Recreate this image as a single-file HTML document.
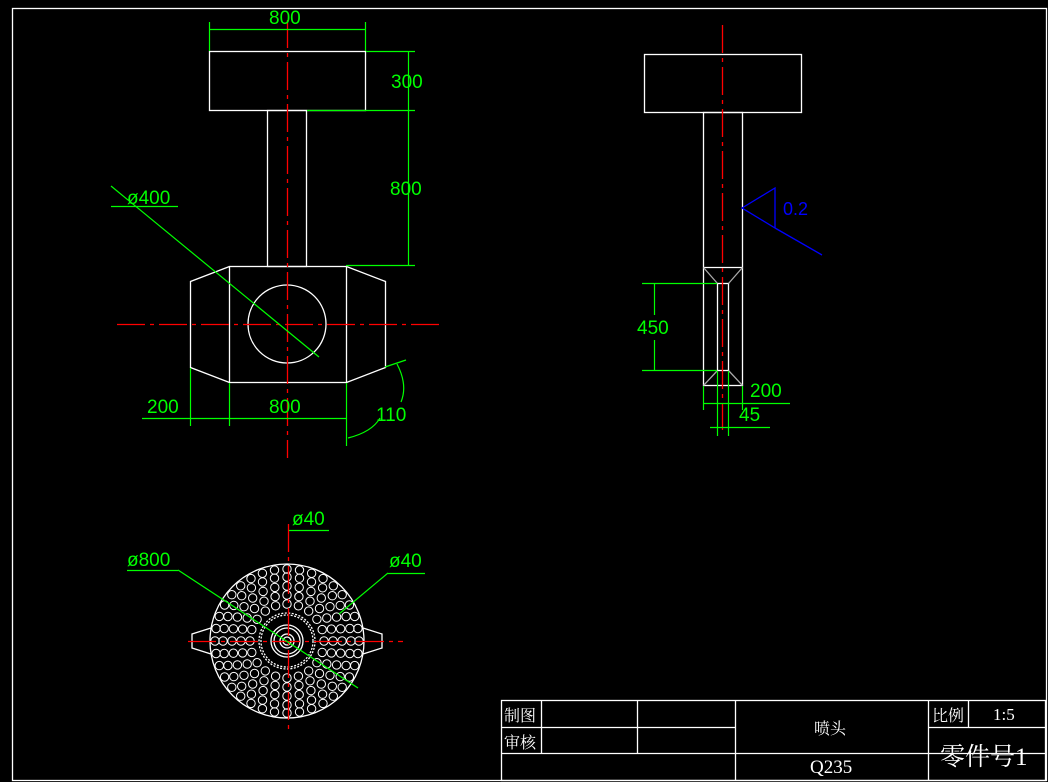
<!DOCTYPE html>
<html><head><meta charset="utf-8"><style>
html,body{margin:0;padding:0;background:#000;width:1048px;height:782px;overflow:hidden}
svg{display:block}
text{font-family:"Liberation Sans",sans-serif;fill:#00ff00;font-size:19px}
.cj{font-family:"Liberation Serif","Noto Serif CJK SC",serif;fill:#fff}
</style></head><body>
<svg width="1048" height="782" viewBox="0 0 1048 782" xmlns="http://www.w3.org/2000/svg">
<g fill="none" stroke="#fff" stroke-width="1.3">
<rect x="12.5" y="8.5" width="1034" height="772"/>
<rect x="209.5" y="51.5" width="156" height="59"/>
<rect x="267.5" y="110.5" width="39" height="156"/>
<rect x="229.5" y="266.5" width="117" height="116"/>
<polyline points="229.5,266.5 190.5,281.5 190.5,367.5 229.5,382.5"/>
<polyline points="346.5,266.5 385.5,281.5 385.5,367.5 346.5,382.5"/>
<circle cx="287" cy="324" r="39"/>
<rect x="644.5" y="54.5" width="157" height="58"/>
<rect x="703.5" y="112.5" width="39" height="273"/>
<line x1="703.5" y1="267.5" x2="742.5" y2="267.5"/>
<rect x="717.5" y="283.5" width="11" height="87"/>
<g stroke="#aaa"><line x1="703.5" y1="267.5" x2="717.5" y2="283.5"/><line x1="742.5" y1="267.5" x2="728.5" y2="283.5"/><line x1="703.5" y1="385.5" x2="717.5" y2="370.5"/><line x1="742.5" y1="385.5" x2="728.5" y2="370.5"/></g>
<circle cx="287" cy="641" r="77"/>
<polyline points="211,628 192,634 192,648 211,654"/>
<polyline points="363,628 382,634 382,648 363,654"/>
<g id="holes" stroke-width="1"></g>
<circle cx="287" cy="641" r="26" stroke-dasharray="2,1.5"/><circle cx="287" cy="641" r="28" stroke-dasharray="2,1.5"/>
<circle cx="287" cy="641" r="16"/><circle cx="287" cy="641" r="13"/>
<circle cx="287" cy="641" r="7"/><circle cx="287" cy="641" r="4"/>
<rect x="501.5" y="700.5" width="544" height="80"/>
<line x1="501.5" y1="727.5" x2="735.5" y2="727.5"/>
<line x1="501.5" y1="753.5" x2="1045.5" y2="753.5"/>
<line x1="541.5" y1="700.5" x2="541.5" y2="753.5"/>
<line x1="637.5" y1="700.5" x2="637.5" y2="753.5"/>
<line x1="735.5" y1="700.5" x2="735.5" y2="780.5"/>
<line x1="928.5" y1="700.5" x2="928.5" y2="780.5"/>
<line x1="928.5" y1="727.5" x2="1045.5" y2="727.5"/>
<line x1="968.5" y1="700.5" x2="968.5" y2="727.5"/>
</g>
<g stroke="#ff0000" stroke-width="1.3" stroke-dasharray="28,5,4,5">
<line x1="287.5" y1="20" x2="287.5" y2="458"/>
<line x1="117" y1="324.5" x2="441" y2="324.5"/>
<line x1="722.5" y1="25" x2="722.5" y2="430"/>
<line x1="288.5" y1="524" x2="288.5" y2="730"/>
<line x1="188" y1="641.5" x2="403" y2="641.5"/>
</g>
<g stroke="#00ff00" stroke-width="1.2" fill="none">
<line x1="209.5" y1="22" x2="209.5" y2="51"/><line x1="365.5" y1="22" x2="365.5" y2="51"/>
<line x1="209" y1="29.5" x2="366" y2="29.5"/>
<line x1="366" y1="51.5" x2="415" y2="51.5"/><line x1="307" y1="110.5" x2="415" y2="110.5"/>
<line x1="346" y1="265.5" x2="415" y2="265.5"/>
<line x1="408.5" y1="51" x2="408.5" y2="266"/>
<line x1="111" y1="186" x2="319" y2="357"/><line x1="111" y1="206.5" x2="178" y2="206.5"/>
<line x1="190.5" y1="368" x2="190.5" y2="426"/><line x1="229.5" y1="383" x2="229.5" y2="426"/><line x1="346.5" y1="383" x2="346.5" y2="446"/>
<line x1="142" y1="418.5" x2="346" y2="418.5"/>
<path d="M385 367 L406 360"/><path d="M397 364 Q408 385 401 402"/><path d="M380 418 Q372 432 348 438"/>
<line x1="642" y1="283.5" x2="717" y2="283.5"/><line x1="642" y1="370.5" x2="717" y2="370.5"/>
<line x1="654.5" y1="284" x2="654.5" y2="315"/><line x1="654.5" y1="340" x2="654.5" y2="370"/>
<line x1="703.5" y1="386" x2="703.5" y2="410"/><line x1="742.5" y1="386" x2="742.5" y2="410"/>
<line x1="703" y1="403.5" x2="790" y2="403.5"/>
<line x1="717.5" y1="371" x2="717.5" y2="436"/><line x1="728.5" y1="371" x2="728.5" y2="436"/>
<line x1="710" y1="427.5" x2="770" y2="427.5"/>
<line x1="289" y1="530.5" x2="329" y2="530.5"/>
<line x1="127" y1="570.5" x2="178" y2="570.5"/><line x1="178" y1="570" x2="358" y2="688"/>
<line x1="388" y1="573.5" x2="425" y2="573.5"/><line x1="388" y1="573" x2="339" y2="614"/>
</g>
<g stroke="#0000ff" stroke-width="1.3" fill="none"><path d="M742 208 L775 188 L775 228 Z M775 228 L822 255"/></g>
<text x="269" y="24">800</text>
<text x="391" y="88">300</text>
<text x="390" y="195">800</text>
<text x="127" y="204">ø400</text>
<text x="147" y="413">200</text>
<text x="269" y="413">800</text>
<text x="376" y="421">110</text>
<text x="637" y="334">450</text>
<text x="750" y="397">200</text>
<text x="739" y="421">45</text>
<text x="783" y="215" style="fill:#0000ff;font-size:18px">0.2</text>
<text x="292" y="525">ø40</text>
<text x="127" y="566">ø800</text>
<text x="389" y="567">ø40</text>
<text class="cj" x="504" y="721" style="font-size:16px">制图</text>
<text class="cj" x="504" y="748" style="font-size:16px">审核</text>
<text class="cj" x="932" y="721" style="font-size:16px">比例</text>
<text class="cj" x="993" y="720" style="font-size:17px">1:5</text>
<text class="cj" x="814" y="734" style="font-size:16px">喷头</text>
<text class="cj" x="810" y="773" style="font-size:19px">Q235</text>
<text class="cj" x="940" y="765" style="font-size:25px">零件号1</text>
</svg>
<script>
var g=document.getElementById('holes'),s='';
var rings=[[37,20],[46,24],[55,28],[64,32],[72,36]];
rings.forEach(function(r,i){for(var k=0;k<r[1];k++){var a=2*Math.PI*k/r[1]+Math.PI/2;var x=287+r[0]*Math.cos(a),y=641+r[0]*Math.sin(a);s+='<circle cx="'+x.toFixed(1)+'" cy="'+y.toFixed(1)+'" r="4.2"/>';}});
g.innerHTML=s;
</script>
</body></html>
